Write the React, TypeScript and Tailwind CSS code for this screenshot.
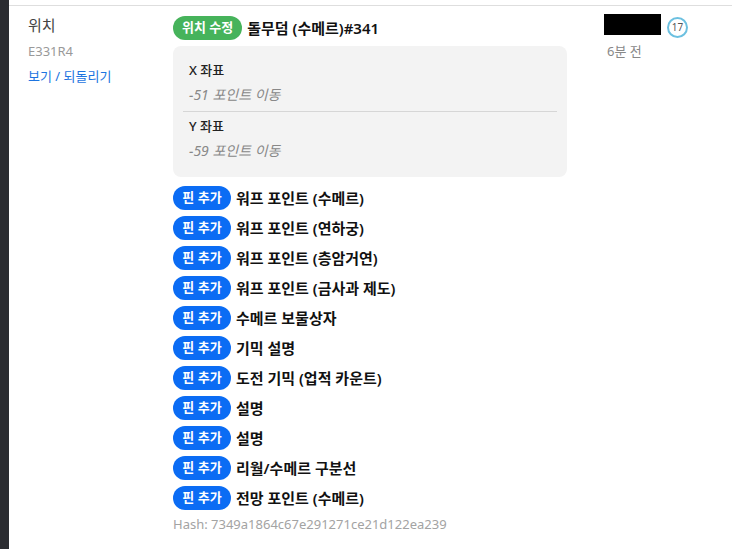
const pins = [
  "워프 포인트 (수메르)",
  "워프 포인트 (연하궁)",
  "워프 포인트 (층암거연)",
  "워프 포인트 (금사과 제도)",
  "수메르 보물상자",
  "기믹 설명",
  "도전 기믹 (업적 카운트)",
  "설명",
  "설명",
  "리월/수메르 구분선",
  "전망 포인트 (수메르)",
];

const coords = [
  { label: "X 좌표", value: "−51 포인트 이동" },
  { label: "Y 좌표", value: "−59 포인트 이동" },
];

export default function App() {
  return (
    <div
      className="flex min-h-[549px] w-[751px] bg-white"
      style={{ fontFamily: '"Noto Sans", "Noto Sans CJK KR", sans-serif' }}
    >
      <div className="w-[9px] shrink-0 bg-[#2b2c31]" />
      <div className="flex-1 pt-[5px] pr-[19px]">
        <div className="grid grid-cols-[145px_431px_1fr] border-t border-[#dedede] pl-[19px]">
          {/* left: field */}
          <div className="pt-[7px]">
            <div className="text-[15px] leading-[24px] text-[#444]">위치</div>
            <div className="mt-[2px] text-[13px] leading-[24px] text-[#999]">E331R4</div>
            <div className="mt-[1px] text-[13px] leading-[24px] text-[#1d74e0]">
              보기 / 되돌리기
            </div>
          </div>

          {/* middle: changes */}
          <div className="pt-[10px]">
            <div className="flex items-center gap-[5px]">
              <span className="flex h-[24px] items-center rounded-full bg-[#46b35b] px-[9px] text-[13px] font-semibold text-white">
                위치 수정
              </span>
              <span className="text-[15px] font-semibold text-[#111]">돌무덤 (수메르)#341</span>
            </div>

            <div className="mt-[6px] w-[394px] rounded-lg bg-[#f3f3f3] px-[10px] pt-[12px] pb-[14px]">
              {coords.map((c, i) => (
                <div
                  key={c.label}
                  className={i === 0 ? "border-b border-[#d6d6d6] pb-[4px]" : "pt-[2px]"}
                >
                  <div className="px-[6px] text-[13px] font-medium leading-[24px] text-[#222]">
                    {c.label}
                  </div>
                  <div className="mt-[1px] px-[6px] text-[14px] italic leading-[24px] text-[#888]">
                    {c.value}
                  </div>
                </div>
              ))}
            </div>

            <div className="mt-[9px] flex flex-col gap-[6px]">
              {pins.map((p, i) => (
                <div key={i} className="flex items-center gap-[5px]">
                  <span className="flex h-[24px] w-[58px] items-center justify-center rounded-full bg-[#0b6cf4] text-[13px] font-semibold text-white">
                    핀 추가
                  </span>
                  <span className="text-[15px] font-semibold text-[#111]">{p}</span>
                </div>
              ))}
            </div>

            <div className="mt-[5px] text-[13px] leading-[18px] text-[#a3a3a3]">
              Hash: 7349a1864c67e291271ce21d122ea239
            </div>
          </div>

          {/* right: author */}
          <div className="pt-[8px]">
            <div className="flex items-start gap-[6px]">
              <div className="h-[21px] w-[57px] bg-black" />
              <div className="mt-[3px] flex h-[21px] w-[21px] items-center justify-center rounded-full border-2 border-[#6cc0e0] text-[10px] text-[#555]">
                17
              </div>
            </div>
            <div className="mt-[3px] pl-[3px] text-[13px] leading-[20px] text-[#888]">6분 전</div>
          </div>
        </div>
      </div>
    </div>
  );
}
